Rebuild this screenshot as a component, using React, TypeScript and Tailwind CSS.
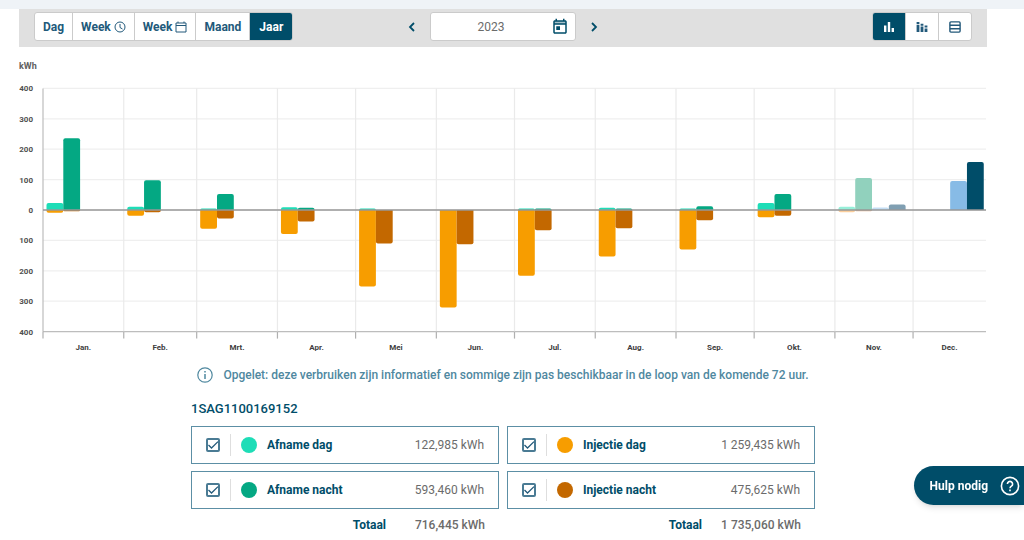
import { useState } from "react";

const COLORS = {
  afnameDag: "#1eddb7",
  afnameNacht: "#04a883",
  injectieDag: "#f79d00",
  injectieNacht: "#c36800",
};

type Bar = { slot: number; value: number; color: string };

const actual = (afnameDag: number, afnameNacht: number, injectieDag: number, injectieNacht: number): Bar[] => [
  { slot: 0, value: afnameDag, color: COLORS.afnameDag },
  { slot: 1, value: afnameNacht, color: COLORS.afnameNacht },
  { slot: 0, value: -injectieDag, color: COLORS.injectieDag },
  { slot: 1, value: -injectieNacht, color: COLORS.injectieNacht },
];

const months: { label: string; days: number; bars: Bar[] }[] = [
  { label: "Jan.", days: 31, bars: actual(23, 236, 9, 4) },
  { label: "Feb.", days: 28, bars: actual(11, 98, 19, 7) },
  { label: "Mrt.", days: 31, bars: actual(5, 53, 62, 28) },
  { label: "Apr.", days: 30, bars: actual(9, 7, 79, 38) },
  { label: "Mei", days: 31, bars: actual(5, 0, 252, 110) },
  { label: "Jun.", days: 30, bars: actual(0, 0, 321, 113) },
  { label: "Jul.", days: 31, bars: actual(5, 5, 216, 67) },
  { label: "Aug.", days: 31, bars: actual(7, 5, 153, 60) },
  { label: "Sep.", days: 30, bars: actual(5, 12, 130, 34) },
  { label: "Okt.", days: 31, bars: actual(23, 53, 24, 19) },
  {
    label: "Nov.",
    days: 30,
    bars: [
      { slot: 0, value: 11, color: "#97efd9" },
      { slot: 1, value: 105, color: "#91d1bd" },
      { slot: 2, value: 8, color: "#c3ddf3" },
      { slot: 3, value: 18, color: "#809fb2" },
      { slot: 0, value: -7, color: "#fbce9c" },
      { slot: 1, value: -4, color: "#e1b391" },
    ],
  },
  {
    label: "Dec.",
    days: 28,
    bars: [
      { slot: 2, value: 95, color: "#87bbe6" },
      { slot: 3, value: 158, color: "#004d69" },
    ],
  },
];

const LEFT = 24;
const RIGHT = 967;
const ZERO = 130;
const PER_100 = 30.4;
const BAR = 16.8;

function Chart() {
  const perDay = (RIGHT - LEFT) / months.reduce((sum, m) => sum + m.days, 0);
  let x = LEFT;
  const columns = months.map((m) => {
    const start = x;
    x += m.days * perDay;
    return { ...m, start, end: x };
  });

  return (
    <svg viewBox="0 0 968 271" className="block w-full overflow-hidden font-['Roboto',sans-serif]" role="img" aria-label="Verbruik per maand in kWh">
      {[4, 3, 2, 1, 0, -1, -2, -3, -4].map((n) => (
        <g key={n}>
          <line x1={LEFT} x2={RIGHT} y1={ZERO - n * PER_100} y2={ZERO - n * PER_100} stroke={n === -4 ? "#bdbdbd" : "#efefef"} strokeWidth="1.2" />
          <text x="14" y={ZERO - n * PER_100 + 3} textAnchor="end" fontSize="8" fontWeight="700" fill="#505050">
            {Math.abs(n) * 100}
          </text>
        </g>
      ))}
      {columns.map((c, i) => (
        <g key={c.label}>
          <line x1={c.start} x2={c.start} y1={ZERO - 4 * PER_100} y2={ZERO + 4 * PER_100} stroke={i === 0 ? "#bdbdbd" : "#eaeaea"} strokeWidth="1.2" />
          <line x1={c.start} x2={c.start} y1={ZERO + 4 * PER_100} y2={ZERO + 4 * PER_100 + 7} stroke="#b0b0b0" strokeWidth="1.2" />
          {c.bars
            .filter((b) => b.value !== 0)
            .map((b) => {
              const h = (Math.abs(b.value) / 100) * PER_100;
              const left = c.start + 3.5 + b.slot * BAR;
              const r = Math.min(2, h);
              const dir = b.value > 0 ? -1 : 1;
              return (
                <path
                  key={`${b.slot}${dir}`}
                  d={`M${left} ${ZERO}V${ZERO + dir * (h - r)}Q${left} ${ZERO + dir * h} ${left + r} ${ZERO + dir * h}H${left + BAR - r}Q${left + BAR} ${ZERO + dir * h} ${left + BAR} ${ZERO + dir * (h - r)}V${ZERO}Z`}
                  fill={b.color}
                />
              );
            })}
          <text x={(c.start + c.end) / 2} y="270" textAnchor="middle" fontSize="8" fontWeight="700" fill="#404040">
            {c.label}
          </text>
        </g>
      ))}
      <line x1={LEFT} x2={RIGHT} y1={ZERO} y2={ZERO} stroke="#979797" strokeWidth="1.4" />
    </svg>
  );
}

function ClockIcon() {
  return (
    <svg viewBox="0 0 24 24" className="size-3" fill="none" stroke="currentColor" strokeWidth="2">
      <circle cx="12" cy="12" r="10" />
      <path d="M12 6v7l5 3" />
    </svg>
  );
}

function CalendarIcon() {
  return (
    <svg viewBox="0 0 24 24" className="size-3" fill="none" stroke="currentColor" strokeWidth="2">
      <path d="M2 4h20v18H2zM2 9h20M6 1v3M18 1v3" />
    </svg>
  );
}

function TodayIcon() {
  return (
    <svg viewBox="0 0 24 24" className="size-[18px]" fill="currentColor">
      <path d="M4 4h16v4H4z" opacity=".35" />
      <path d="M19 3h-1V1h-2v2H8V1H6v2H5c-1.11 0-1.99.9-1.99 2L3 19c0 1.1.89 2 2 2h14c1.1 0 2-.9 2-2V5c0-1.1-.9-2-2-2zm0 16H5V9h14v10zm0-12H5V5h14v2zM7 11h5v5H7z" />
    </svg>
  );
}

function Chevron({ d }: { d: string }) {
  return (
    <svg viewBox="0 0 12 12" className="size-3" fill="none" stroke="currentColor" strokeWidth="1.8">
      <path d={d} />
    </svg>
  );
}

function BarsIcon() {
  return (
    <svg viewBox="0 0 12 12" className="size-3" fill="currentColor">
      <path d="M1 4.5h2.4V11H1zM4.8 1h2.4v10H4.8zM8.6 7H11v4H8.6z" />
    </svg>
  );
}

function StackedIcon() {
  return (
    <svg viewBox="0 0 12 12" className="size-3" fill="currentColor">
      <path d="M.6 1h2.8v2H.6zM.6 3.8h2.8V11H.6zM4.6 2.8h2.8v2H4.6zM4.6 5.6h2.8V11H4.6zM8.6 4.6h2.8v2H8.6zM8.6 7.4h2.8V11H8.6z" />
    </svg>
  );
}

function RowsIcon() {
  return (
    <svg viewBox="0 0 12 12" className="size-3" fill="none" stroke="currentColor" strokeWidth="1.4">
      <rect x=".9" y=".9" width="10.2" height="10.2" rx="1" />
      <path d="M.9 4.3h10.2M.9 7.7h10.2" />
    </svg>
  );
}

const periods = [
  { id: "dag", label: "Dag", icon: null },
  { id: "week-uur", label: "Week", icon: ClockIcon },
  { id: "week-dag", label: "Week", icon: CalendarIcon },
  { id: "maand", label: "Maand", icon: null },
  { id: "jaar", label: "Jaar", icon: null },
];

const views = [
  { id: "bars", label: "Staafdiagram", icon: BarsIcon },
  { id: "stacked", label: "Gestapeld", icon: StackedIcon },
  { id: "table", label: "Tabel", icon: RowsIcon },
];

const groups = [
  {
    total: "716,445 kWh",
    items: [
      { id: "afname-dag", label: "Afname dag", value: "122,985 kWh", dot: "bg-[#1eddb7]" },
      { id: "afname-nacht", label: "Afname nacht", value: "593,460 kWh", dot: "bg-[#04a883]" },
    ],
  },
  {
    total: "1 735,060 kWh",
    items: [
      { id: "injectie-dag", label: "Injectie dag", value: "1 259,435 kWh", dot: "bg-[#f79d00]" },
      { id: "injectie-nacht", label: "Injectie nacht", value: "475,625 kWh", dot: "bg-[#c36800]" },
    ],
  },
];

export default function App() {
  const [period, setPeriod] = useState("jaar");
  const [view, setView] = useState("bars");
  const [year, setYear] = useState(2023);

  return (
    <div className="bg-white font-['Roboto',sans-serif] text-[#004d69]">
      <div className="h-[9px] bg-[#eff3f7]" />

      <main className="pl-[19px] pr-[37px]">
        <div className="grid grid-cols-[1fr_auto_1fr] items-start bg-[#e0e0e0] pt-[3px] pb-[6px] px-[15px]">
          <div className="flex h-[29px] justify-self-start overflow-hidden rounded-[3px] border border-[#cbcbcb] bg-white">
            {periods.map(({ id, label, icon: Icon }) => (
              <button
                key={id}
                onClick={() => setPeriod(id)}
                className={`flex items-center gap-[3px] border-r border-[#cbcbcb] px-2 text-xs font-bold last:border-r-0 last:px-[9px] ${
                  period === id ? "bg-[#004d69] text-white" : "text-[#22597a]"
                }`}
              >
                {label}
                {Icon && <Icon />}
              </button>
            ))}
          </div>

          <div className="flex items-center">
            <button aria-label="Vorig jaar" onClick={() => setYear(year - 1)} className="px-3">
              <Chevron d="M8 2L4 6l4 4" />
            </button>
            <div className="flex h-[29px] w-[146px] items-center rounded-[3px] border border-[#cbcbcb] bg-white pr-1.5">
              <input
                aria-label="Jaar"
                value={year}
                readOnly
                className="w-full min-w-0 text-center text-xs text-[#6b6b6b] outline-none"
              />
              <button aria-label="Kies een jaar" className="shrink-0">
                <TodayIcon />
              </button>
            </div>
            <button aria-label="Volgend jaar" onClick={() => setYear(year + 1)} className="px-3">
              <Chevron d="M4 2l4 4-4 4" />
            </button>
          </div>

          <div className="flex h-[29px] justify-self-end overflow-hidden rounded-[3px] border border-[#cbcbcb] bg-white">
            {views.map(({ id, label, icon: Icon }) => (
              <button
                key={id}
                aria-label={label}
                onClick={() => setView(id)}
                className={`grid w-[33px] place-items-center border-r border-[#cbcbcb] last:w-8 last:border-r-0 ${
                  view === id ? "bg-[#004d69] text-white" : "text-[#22597a]"
                }`}
              >
                <Icon />
              </button>
            ))}
          </div>
        </div>

        <p className="mt-3 text-[9px] leading-[14px] font-bold text-[#606060]">kWh</p>
        <div className="mt-[7px]">
          <Chart />
        </div>

        <p className="mt-[15px] flex items-center justify-center gap-2.5 text-xs leading-[18px] font-medium text-[#4f889f]">
          <svg viewBox="0 0 16 16" className="size-4 shrink-0" fill="none" stroke="currentColor" strokeWidth="1.2">
            <circle cx="8" cy="8" r="7.2" />
            <path d="M8 7v5M8 4v1.5" strokeWidth="1.5" />
          </svg>
          Opgelet: deze verbruiken zijn informatief en sommige zijn pas beschikbaar in de loop van de komende 72 uur.
        </p>

        <section className="mx-auto mt-4 max-w-[624px]">
          <h2 className="text-[13px] leading-[18px] font-medium">1SAG1100169152</h2>
          <div className="mt-2 grid grid-cols-2 gap-x-2">
            {groups.map((group) => (
              <div key={group.total} className="flex flex-col gap-[7px]">
                {group.items.map((item) => (
                  <label key={item.id} className="flex h-[38px] items-center border border-[#5c8fa5] px-3.5 text-xs">
                    <span className="grid size-3.5 place-items-center">
                      <input
                        type="checkbox"
                        defaultChecked
                        className="peer col-start-1 row-start-1 size-3.5 appearance-none rounded-[2px] border-2 border-[#4a7b94]"
                      />
                      <svg
                        viewBox="0 0 14 14"
                        className="pointer-events-none invisible col-start-1 row-start-1 size-3.5 peer-checked:visible"
                        fill="none"
                        stroke="#22597a"
                        strokeWidth="1.3"
                      >
                        <path d="M2.5 7l3 3L12 3.6" />
                      </svg>
                    </span>
                    <span className="mx-2.5 h-[22px] border-l border-[#dedede]" />
                    <span className={`size-4 rounded-full ${item.dot}`} />
                    <span className="ml-2.5 font-bold">{item.label}</span>
                    <span className="ml-auto text-[#6b6b6b]">{item.value}</span>
                  </label>
                ))}
                <p className="flex justify-end px-3.5 text-xs leading-[18px]">
                  <span className="font-bold">Totaal</span>
                  <span className="w-[99px] text-right font-medium text-[#6b6b6b]">{group.total}</span>
                </p>
              </div>
            ))}
          </div>
        </section>
      </main>

      <button className="fixed right-0 bottom-[35px] flex h-[39px] items-center gap-3 rounded-l-full bg-[#004d69] pr-1 pl-4 text-xs font-bold text-white shadow-md">
        Hulp nodig
        <svg viewBox="0 0 20 20" className="size-5" fill="none" stroke="currentColor" strokeWidth="1.6">
          <circle cx="10" cy="10" r="8.6" />
          <path d="M7.4 8a2.6 2.6 0 1 1 4 2.2c-.9.6-1.4 1-1.4 2.1M10 13.6v1.6" />
        </svg>
      </button>
    </div>
  );
}
